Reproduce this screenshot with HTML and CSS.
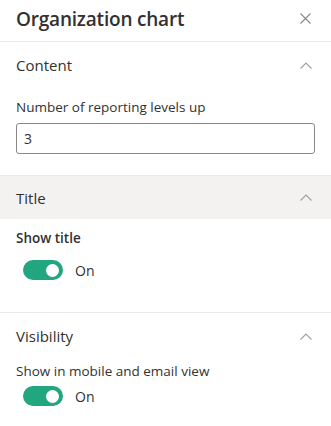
FILE: index.html
```html
<!DOCTYPE html>
<html lang="en">
<head>
<meta charset="utf-8">
<title>Organization chart</title>
<link rel="stylesheet" href="styles.css">
</head>
<body>
<div class="panel">
  <header class="panel-header">
    <h1 class="panel-title">Organization chart</h1>
    <button class="close" aria-label="Close">
      <svg width="11" height="11" viewBox="0 0 11 11"><path d="M0.5 0.5L10.5 10.5M10.5 0.5L0.5 10.5" stroke="#8a8886" stroke-width="1.1" fill="none"/></svg>
    </button>
  </header>

  <section class="group">
    <div class="group-head">
      <span>Content</span>
      <svg class="chev" width="12" height="7" viewBox="0 0 12 7"><path d="M0.5 6.5L6 1L11.5 6.5" stroke="#a19f9d" stroke-width="1.1" fill="none"/></svg>
    </div>
    <div class="group-body content-body">
      <label class="label" for="lv">Number of reporting levels up</label>
      <div class="input"><span>3</span></div>
    </div>
  </section>

  <section class="group">
    <div class="group-head shaded">
      <span>Title</span>
      <svg class="chev" width="12" height="7" viewBox="0 0 12 7"><path d="M0.5 6.5L6 1L11.5 6.5" stroke="#a19f9d" stroke-width="1.1" fill="none"/></svg>
    </div>
    <div class="group-body toggle-body">
      <div class="label strong">Show title</div>
      <div class="toggle-row"><span class="toggle"><span class="knob"></span></span><span class="state">On</span></div>
    </div>
  </section>

  <section class="group bordered">
    <div class="group-head">
      <span>Visibility</span>
      <svg class="chev" width="12" height="7" viewBox="0 0 12 7"><path d="M0.5 6.5L6 1L11.5 6.5" stroke="#a19f9d" stroke-width="1.1" fill="none"/></svg>
    </div>
    <div class="group-body vis-body">
      <div class="label">Show in mobile and email view</div>
      <div class="toggle-row small-gap"><span class="toggle"><span class="knob"></span></span><span class="state">On</span></div>
    </div>
  </section>
</div>
</body>
</html>
```

FILE: styles.css
```css
* { box-sizing: border-box; }
html, body { margin: 0; padding: 0; background: #ffffff; }
body {
  font-family: "Open Sans", "Noto Sans", sans-serif;
  color: #323130;
  width: 331px;
  height: 426px;
  overflow: hidden;
}
.panel { display: flex; flex-direction: column; }
.panel-header {
  height: 42px;
  display: flex;
  align-items: center;
  justify-content: space-between;
  padding: 0 20px 4px 16px;
  border-bottom: 1px solid #edebe9;
}
.panel-title {
  margin: 0;
  font-size: 19px;
  font-weight: 600;
  letter-spacing: -0.2px;
  color: #323130;
}
.close {
  border: 0;
  background: none;
  padding: 0;
  display: flex;
}
.group-head {
  height: 46px;
  display: flex;
  align-items: center;
  justify-content: space-between;
  padding: 0 19px 0 16px;
  font-size: 15px;
  color: #323130;
}
.group-head.shaded {
  height: 44px;
  background: #f3f2f1;
  border-top: 1px solid #edebe9;
}
.group.bordered { border-top: 1px solid #edebe9; }
.group-body { padding: 0 16px; }
.content-body { padding-top: 7px; padding-bottom: 21px; }
.label {
  font-size: 13.5px;
  line-height: 20px;
  color: #323130;
}
.label.strong { font-weight: 600; }
.input {
  margin-top: 6px;
  height: 31px;
  border: 1px solid #8a8886;
  border-radius: 3px;
  display: flex;
  align-items: center;
  padding: 0 7px;
  font-size: 14px;
}
.toggle-body { padding-top: 9px; padding-bottom: 32px; }
.vis-body { padding-top: 2px; padding-bottom: 20px; }
.toggle-row {
  margin-top: 12px;
  padding-left: 7px;
  display: flex;
  align-items: center;
  gap: 12px;
}
.toggle-row.small-gap { margin-top: 5px; }
.toggle {
  width: 40px;
  height: 20px;
  border-radius: 10px;
  background: #21a67f;
  display: flex;
  align-items: center;
  justify-content: flex-end;
  padding-right: 4px;
}
.knob {
  width: 13px;
  height: 13px;
  border-radius: 50%;
  background: #ffffff;
}
.state { font-size: 14px; color: #323130; }
```
